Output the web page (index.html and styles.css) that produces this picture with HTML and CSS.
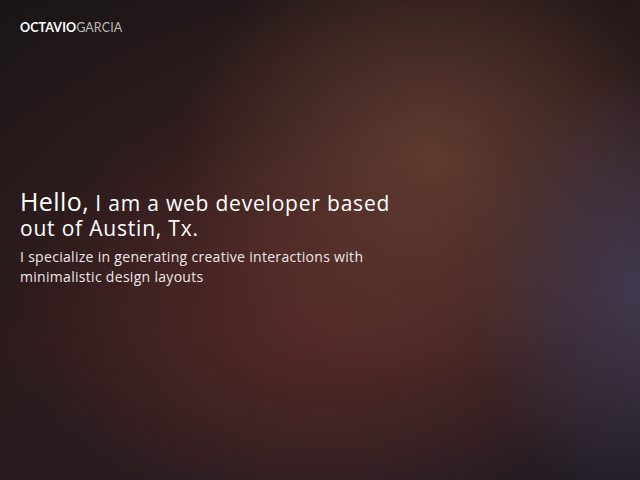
FILE: index.html
```html
<!DOCTYPE html>
<html lang="en">
<head>
<meta charset="utf-8">
<title>Octavio Garcia</title>
<link rel="stylesheet" href="styles.css">
</head>
<body>
<div class="page">
  <header class="header">
    <div class="logo"><span class="logo-first">OCTAVIO</span><span class="logo-last">GARCIA</span></div>
  </header>
  <main class="hero">
    <h1 class="title"><span class="hello">Hello,</span> I am a web developer based out of Austin, Tx.</h1>
    <p class="lead">I specialize in generating creative interactions with minimalistic design layouts</p>
  </main>
</div>
</body>
</html>
```

FILE: styles.css
```css
html, body {
  margin: 0;
  padding: 0;
  height: 100%;
}
body {
  font-family: "Open Sans", "Noto Sans", sans-serif;
  color: #f2eeee;
  background-color: #231819;
  background-image:
    radial-gradient(ellipse 170px 220px at 640px 290px, rgba(70, 62, 88, 0.85), rgba(70, 62, 88, 0) 100%),
    radial-gradient(ellipse 250px 230px at 430px 160px, rgba(96, 60, 48, 0.95), rgba(96, 60, 48, 0) 100%),
    radial-gradient(ellipse 300px 200px at 330px 320px, rgba(88, 42, 40, 0.9), rgba(88, 42, 40, 0) 100%),
    radial-gradient(ellipse 420px 320px at 320px 260px, rgba(62, 34, 34, 0.9), rgba(62, 34, 34, 0) 100%),
    linear-gradient(160deg, #1a1516 0%, #2a1a1b 50%, #201b24 100%);
  overflow: hidden;
}
.page {
  height: 480px;
  display: flex;
  flex-direction: column;
}
.header {
  padding: 20px 20px 0;
}
.logo {
  font-family: "Lato", "Open Sans", sans-serif;
  font-size: 12.5px;
  letter-spacing: 0.1px;
  line-height: 16px;
}
.logo-first {
  color: #ffffff;
  font-weight: 700;
}
.logo-last {
  color: #bdb6b6;
  font-weight: 400;
}
.hero {
  padding: 153px 20px 0;
}
.title {
  margin: 0;
  width: 372px;
  font-weight: 500;
  font-size: 21px;
  line-height: 25px;
  letter-spacing: 0.8px;
  color: #ffffff;
}
.hello {
  font-size: 25px;
  letter-spacing: 0.4px;
}
.lead {
  margin: 6px 0 0;
  width: 360px;
  font-size: 14px;
  line-height: 19.5px;
  letter-spacing: 0.3px;
  color: #eee8e8;
}
```
